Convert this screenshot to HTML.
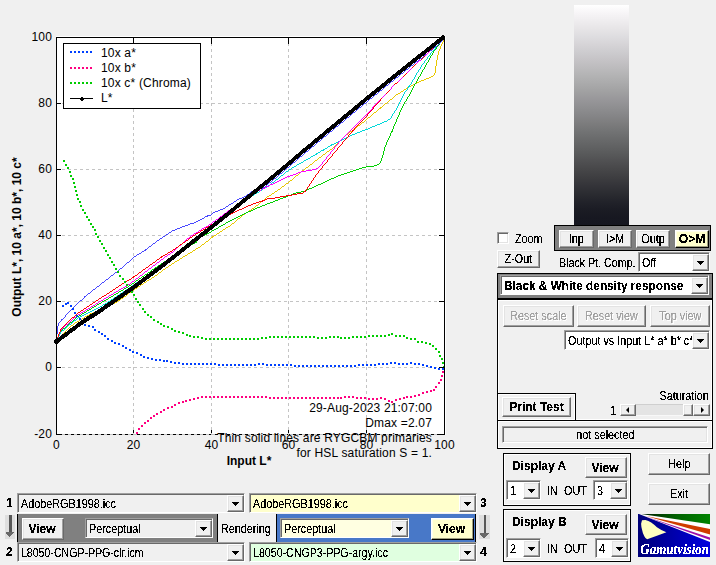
<!DOCTYPE html>
<html lang="en"><head><meta charset="utf-8"><title>Gamutvision</title>
<style>
html,body{margin:0;padding:0}
body{width:716px;height:565px;overflow:hidden;background:#f0f0f0;position:relative;font-family:"Liberation Sans",sans-serif;font-size:12px;color:#000}
.t{position:absolute;white-space:nowrap;line-height:14px;height:14px;font-size:12px}
.p{letter-spacing:.17px}
.p.b{letter-spacing:0}
.s{display:inline-block;transform:scaleX(.9);transform-origin:0 0}
.b .s{transform:none}
.u,.t.b:not(.p),.f,.ct{filter:url(#thr)}
.u.r .s{transform-origin:100% 0}
.b{font-weight:bold}
.btn{position:absolute;box-sizing:border-box;background:#f0f0f0;border:1px solid;border-color:#fff #696969 #696969 #fff;box-shadow:inset -1px -1px 0 #a0a0a0,inset 1px 1px 0 #e3e3e3;text-align:center;white-space:nowrap;font-size:12px;display:flex;align-items:center;justify-content:center;line-height:14px}
.btn .f{display:inline-block}
.btn .s{transform-origin:50% 0}
.btn.sel{border-color:#fff #000 #000 #fff;box-shadow:inset -1px -1px 0 #a0a080,inset 1px 1px 0 #ffffe8}
.btn.dis{color:#a0a0a0;text-shadow:1px 1px 0 #fff}
.combo{position:absolute;box-sizing:border-box;border:1px solid;border-color:#a0a0a0 #fff #fff #a0a0a0;box-shadow:inset 1px 1px 0 #696969;white-space:nowrap;overflow:hidden;font-size:12px;line-height:14px}
.combo .ct{position:absolute;left:3px;display:inline-block}
.combo .cb{position:absolute;right:0;top:1px;bottom:0;box-sizing:border-box;border:1px solid;border-color:#fff #696969 #696969 #fff;box-shadow:inset -1px -1px 0 #a0a0a0,inset 1px 1px 0 #e3e3e3}
.combo .cb svg{position:absolute;left:4px;top:6px;display:block}
.panel{position:absolute;box-sizing:border-box}
.et{box-shadow:inset 0 0 0 1px #fff}
.chk{position:absolute;box-sizing:border-box;width:12px;height:12px;background:#fff;border:1px solid;border-color:#a0a0a0 #fff #fff #a0a0a0;box-shadow:inset 1px 1px 0 #696969,inset -1px -1px 0 #e3e3e3}
.sunk{position:absolute;box-sizing:border-box;border:1px solid;border-color:#a0a0a0 #fff #fff #a0a0a0;box-shadow:inset 1px 1px 0 #696969,inset -1px -1px 0 #e3e3e3;text-align:center;font-size:12px;line-height:14px;white-space:nowrap;padding-top:1px}
.sunk .f{display:inline-block}
.sunk .s{transform-origin:50% 0}
.sb{position:absolute;background:#e4e4e4;box-shadow:inset 0 1px 0 #cfcfcf,inset 0 -1px 0 #f8f8f8}
.sbb{position:absolute;top:0;height:100%;box-sizing:border-box;background:#f0f0f0;border:1px solid;border-color:#fff #696969 #696969 #fff;box-shadow:inset -1px -1px 0 #a0a0a0,inset 1px 1px 0 #e3e3e3}
.al,.ar{position:absolute;top:50%;left:50%;width:0;height:0;border-top:3px solid transparent;border-bottom:3px solid transparent;margin-top:-3px}
.al{border-right:3px solid #000;margin-left:-2px}
.ar{border-left:3px solid #000;margin-left:-1px}
</style></head>
<body>
<svg width="0" height="0" style="position:absolute"><defs><filter id="thr" x="-5%" y="-5%" width="110%" height="110%" color-interpolation-filters="sRGB"><feComponentTransfer><feFuncA type="discrete" tableValues="0 0 0 0 1 1 1 1 1 1"/></feComponentTransfer></filter></defs></svg>
<svg width="716" height="565" viewBox="0 0 716 565" style="position:absolute;left:0;top:0" shape-rendering="crispEdges">
<rect x="56" y="36" width="390" height="399" fill="#fff"/>
<line x1="56" y1="434.5" x2="445" y2="434.5" stroke="#000"/>
<line x1="56.5" y1="428" x2="56.5" y2="435" stroke="#000"/>
<line x1="133.5" y1="428" x2="133.5" y2="435" stroke="#000"/>
<line x1="211.5" y1="428" x2="211.5" y2="435" stroke="#000"/>
<line x1="288.5" y1="428" x2="288.5" y2="435" stroke="#000"/>
<line x1="366.5" y1="428" x2="366.5" y2="435" stroke="#000"/>
<line x1="444.5" y1="428" x2="444.5" y2="435" stroke="#000"/>
<line x1="133.5" y1="37" x2="133.5" y2="435" stroke="#c4c4c4" stroke-dasharray="3 3"/>
<line x1="211.5" y1="37" x2="211.5" y2="435" stroke="#c4c4c4" stroke-dasharray="3 3"/>
<line x1="288.5" y1="37" x2="288.5" y2="435" stroke="#c4c4c4" stroke-dasharray="3 3"/>
<line x1="366.5" y1="37" x2="366.5" y2="435" stroke="#c4c4c4" stroke-dasharray="3 3"/>
<line x1="56" y1="434.5" x2="444" y2="434.5" stroke="#c4c4c4" stroke-dasharray="3 3"/>
<line x1="56" y1="367.5" x2="444" y2="367.5" stroke="#c4c4c4" stroke-dasharray="3 3"/>
<line x1="56" y1="301.5" x2="444" y2="301.5" stroke="#c4c4c4" stroke-dasharray="3 3"/>
<line x1="56" y1="235.5" x2="444" y2="235.5" stroke="#c4c4c4" stroke-dasharray="3 3"/>
<line x1="56" y1="169.5" x2="444" y2="169.5" stroke="#c4c4c4" stroke-dasharray="3 3"/>
<line x1="56" y1="103.5" x2="444" y2="103.5" stroke="#c4c4c4" stroke-dasharray="3 3"/>
<line x1="56" y1="37.5" x2="444" y2="37.5" stroke="#c4c4c4" stroke-dasharray="3 3"/>
<path d="M443 39h1v3h-1zM442 42h1v2h-1zM441 44h1v2h-1zM440 46h1v3h-1zM439 49h1v2h-1zM438 51h1v4h-1zM437 55h1v5h-1zM436 60h1v6h-1zM435 66h1v7h-1zM434 73h1v2h-1zM433 75h1v1h-1zM431 76h2v1h-2zM429 77h2v1h-2zM426 78h3v1h-3zM424 79h2v1h-2zM421 80h3v1h-3zM419 81h2v1h-2zM417 82h2v1h-2zM415 83h2v1h-2zM413 84h2v1h-2zM411 85h2v1h-2zM408 86h3v1h-3zM407 87h2v1h-2zM406 88h1v1h-1zM404 89h2v1h-2zM403 90h1v1h-1zM401 91h2v1h-2zM400 92h1v1h-1zM398 93h2v1h-2zM396 94h2v1h-2zM395 95h1v1h-1zM394 96h1v1h-1zM393 97h1v1h-1zM392 98h1v1h-1zM390 99h2v1h-2zM389 100h1v1h-1zM388 101h1v1h-1zM387 102h1v1h-1zM385 103h2v1h-2zM384 104h1v1h-1zM383 105h1v1h-1zM382 106h1v1h-1zM380 107h2v1h-2zM379 108h2v1h-2zM378 109h1v1h-1zM377 110h1v1h-1zM376 111h1v1h-1zM374 112h2v1h-2zM373 113h1v1h-1zM372 114h1v1h-1zM371 115h1v1h-1zM370 116h1v1h-1zM368 117h2v1h-2zM367 118h1v1h-1zM366 119h1v1h-1zM365 120h1v1h-1zM364 121h1v1h-1zM362 122h2v1h-2zM361 123h1v1h-1zM360 124h1v1h-1zM358 125h2v1h-2zM357 126h1v1h-1zM356 127h1v1h-1zM354 128h2v1h-2zM353 129h1v1h-1zM352 130h1v1h-1zM350 131h2v1h-2zM349 132h1v1h-1zM347 133h2v1h-2zM346 134h2v1h-2zM345 135h1v1h-1zM344 136h1v1h-1zM343 137h1v1h-1zM342 138h1v1h-1zM341 139h1v1h-1zM340 140h1v1h-1zM339 141h1v1h-1zM338 142h1v1h-1zM337 143h1v1h-1zM336 144h1v1h-1zM335 145h1v1h-1zM334 146h1v1h-1zM333 147h1v1h-1zM332 148h1v1h-1zM330 149h2v1h-2zM329 150h1v1h-1zM327 151h2v1h-2zM326 152h1v1h-1zM325 153h1v1h-1zM323 154h2v1h-2zM322 155h1v1h-1zM321 156h1v1h-1zM319 157h2v1h-2zM318 158h1v1h-1zM317 159h1v1h-1zM315 160h2v1h-2zM314 161h1v1h-1zM313 162h1v1h-1zM312 163h1v1h-1zM310 164h2v1h-2zM309 165h1v1h-1zM308 166h1v1h-1zM306 167h2v1h-2zM305 168h1v1h-1zM304 169h1v1h-1zM302 170h2v1h-2zM301 171h2v1h-2zM300 172h1v1h-1zM299 173h1v1h-1zM298 174h1v1h-1zM296 175h2v1h-2zM295 176h1v1h-1zM294 177h1v1h-1zM293 178h1v1h-1zM292 179h1v1h-1zM290 180h2v1h-2zM289 181h1v1h-1zM288 182h1v1h-1zM286 183h2v1h-2zM285 184h1v1h-1zM284 185h1v1h-1zM282 186h2v1h-2zM281 187h1v1h-1zM280 188h1v1h-1zM278 189h2v1h-2zM277 190h1v1h-1zM275 191h2v1h-2zM274 192h1v1h-1zM272 193h2v1h-2zM271 194h1v1h-1zM269 195h2v1h-2zM267 196h2v1h-2zM266 197h1v1h-1zM265 198h1v1h-1zM264 199h1v1h-1zM262 200h2v1h-2zM261 201h1v1h-1zM260 202h1v1h-1zM259 203h1v1h-1zM258 204h1v1h-1zM256 205h2v1h-2zM255 206h1v1h-1zM254 207h1v1h-1zM252 208h2v1h-2zM251 209h1v1h-1zM249 210h2v1h-2zM248 211h1v1h-1zM246 212h2v1h-2zM245 213h1v1h-1zM243 214h2v1h-2zM242 215h1v1h-1zM241 216h1v1h-1zM240 217h1v1h-1zM238 218h2v1h-2zM237 219h1v1h-1zM236 220h1v1h-1zM235 221h1v1h-1zM234 222h1v1h-1zM232 223h2v1h-2zM231 224h1v1h-1zM230 225h1v1h-1zM228 226h2v1h-2zM226 227h2v1h-2zM225 228h1v1h-1zM223 229h2v1h-2zM222 230h1v1h-1zM220 231h2v1h-2zM219 232h1v1h-1zM217 233h2v1h-2zM216 234h1v1h-1zM214 235h2v1h-2zM212 236h2v1h-2zM211 237h2v1h-2zM210 238h1v1h-1zM209 239h1v1h-1zM208 240h1v1h-1zM206 241h2v1h-2zM205 242h1v1h-1zM204 243h1v1h-1zM202 244h2v1h-2zM201 245h1v1h-1zM200 246h1v1h-1zM198 247h2v1h-2zM196 248h2v1h-2zM195 249h1v1h-1zM193 250h2v1h-2zM192 251h1v1h-1zM190 252h2v1h-2zM188 253h2v1h-2zM187 254h1v1h-1zM185 255h2v1h-2zM183 256h2v1h-2zM182 257h1v1h-1zM180 258h2v1h-2zM179 259h1v1h-1zM177 260h2v1h-2zM175 261h2v1h-2zM174 262h1v1h-1zM172 263h2v1h-2zM171 264h1v1h-1zM169 265h2v1h-2zM168 266h1v1h-1zM166 267h2v1h-2zM165 268h1v1h-1zM163 269h2v1h-2zM162 270h1v1h-1zM161 271h1v1h-1zM159 272h2v1h-2zM158 273h1v1h-1zM157 274h1v1h-1zM155 275h2v1h-2zM154 276h1v1h-1zM152 277h2v1h-2zM151 278h1v1h-1zM149 279h2v1h-2zM147 280h2v1h-2zM146 281h1v1h-1zM144 282h2v1h-2zM143 283h1v1h-1zM141 284h2v1h-2zM140 285h1v1h-1zM138 286h2v1h-2zM137 287h1v1h-1zM135 288h2v1h-2zM133 289h2v1h-2zM132 290h2v1h-2zM131 291h1v1h-1zM129 292h2v1h-2zM128 293h1v1h-1zM127 294h1v1h-1zM126 295h1v1h-1zM124 296h2v1h-2zM123 297h1v1h-1zM121 298h2v1h-2zM120 299h1v1h-1zM118 300h2v1h-2zM117 301h1v1h-1zM115 302h2v1h-2zM113 303h2v1h-2zM111 304h2v1h-2zM109 305h2v1h-2zM106 306h3v1h-3zM104 307h2v1h-2zM102 308h2v1h-2zM99 309h3v1h-3zM97 310h2v1h-2zM95 311h2v1h-2zM93 312h2v1h-2zM90 313h3v1h-3zM89 314h1v1h-1zM87 315h2v1h-2zM85 316h2v1h-2zM84 317h1v1h-1zM82 318h2v1h-2zM80 319h2v1h-2zM79 320h1v1h-1zM77 321h2v1h-2zM75 322h2v1h-2zM74 323h1v1h-1zM73 324h1v1h-1zM71 325h2v1h-2zM70 326h1v1h-1zM69 327h1v1h-1zM68 328h1v1h-1zM67 329h1v1h-1zM66 330h1v1h-1zM65 331h1v1h-1zM64 332h1v1h-1zM63 333h1v1h-1zM62 334h1v1h-1zM61 335h1v1h-1zM60 336h1v1h-1zM59 337h1v2h-1zM58 339h1v1h-1zM57 340h1v1h-1z" fill="#e8c800"/>
<path d="M443 38h1v1h-1zM442 39h1v2h-1zM441 41h1v1h-1zM440 42h1v1h-1zM439 43h1v2h-1zM438 45h1v1h-1zM437 46h1v1h-1zM436 47h1v2h-1zM435 49h1v1h-1zM434 50h1v1h-1zM433 51h1v2h-1zM432 53h1v2h-1zM431 55h1v1h-1zM430 56h1v2h-1zM429 58h1v2h-1zM428 60h1v2h-1zM427 62h1v1h-1zM426 63h1v2h-1zM425 65h1v2h-1zM424 67h1v2h-1zM423 69h1v1h-1zM422 70h1v2h-1zM421 72h1v2h-1zM420 74h1v2h-1zM419 76h1v1h-1zM418 77h1v2h-1zM417 79h1v2h-1zM416 81h1v2h-1zM415 83h1v1h-1zM414 84h1v2h-1zM413 86h1v2h-1zM412 88h1v2h-1zM411 90h1v2h-1zM410 92h1v2h-1zM409 94h1v2h-1zM408 96h1v1h-1zM407 97h1v2h-1zM406 99h1v2h-1zM405 101h1v1h-1zM404 102h1v2h-1zM403 104h1v2h-1zM402 106h1v2h-1zM401 108h1v2h-1zM400 110h1v2h-1zM399 112h1v3h-1zM398 115h1v2h-1zM397 117h1v2h-1zM396 119h1v3h-1zM395 122h1v2h-1zM394 124h1v2h-1zM393 126h1v3h-1zM392 129h1v2h-1zM391 131h2v1h-2zM391 132h1v1h-1zM390 133h1v3h-1zM389 136h1v2h-1zM388 138h1v2h-1zM387 140h1v2h-1zM386 142h1v3h-1zM385 145h1v2h-1zM384 147h1v4h-1zM383 151h1v4h-1zM382 155h1v3h-1zM381 158h1v3h-1zM380 161h1v2h-1zM379 163h1v1h-1zM377 164h2v1h-2zM374 165h3v1h-3zM366 166h8v1h-8zM362 167h4v1h-4zM359 168h3v1h-3zM356 169h3v1h-3zM353 170h3v1h-3zM350 171h3v1h-3zM347 172h3v1h-3zM344 173h3v1h-3zM341 174h3v1h-3zM338 175h3v1h-3zM336 176h2v1h-2zM334 177h2v1h-2zM331 178h3v1h-3zM329 179h2v1h-2zM327 180h2v1h-2zM325 181h2v1h-2zM323 182h2v1h-2zM321 183h2v1h-2zM318 184h3v1h-3zM316 185h2v1h-2zM314 186h2v1h-2zM312 187h2v1h-2zM309 188h3v1h-3zM307 189h2v1h-2zM305 190h2v1h-2zM301 191h4v1h-4zM296 192h5v1h-5zM293 193h3v1h-3zM291 194h2v1h-2zM288 195h3v1h-3zM286 196h2v1h-2zM283 197h3v1h-3zM280 198h3v1h-3zM278 199h2v1h-2zM275 200h3v1h-3zM273 201h2v1h-2zM270 202h3v1h-3zM267 203h3v1h-3zM265 204h2v1h-2zM262 205h3v1h-3zM260 206h2v1h-2zM257 207h3v1h-3zM255 208h2v1h-2zM253 209h2v1h-2zM251 210h2v1h-2zM248 211h3v1h-3zM246 212h2v1h-2zM244 213h2v1h-2zM242 214h2v1h-2zM240 215h2v1h-2zM238 216h2v1h-2zM236 217h2v1h-2zM234 218h2v1h-2zM232 219h2v1h-2zM230 220h2v1h-2zM228 221h2v1h-2zM226 222h2v1h-2zM225 223h1v1h-1zM223 224h2v1h-2zM221 225h2v1h-2zM219 226h2v1h-2zM218 227h1v1h-1zM216 228h2v1h-2zM214 229h2v1h-2zM212 230h2v1h-2zM211 231h1v1h-1zM209 232h2v1h-2zM207 233h2v1h-2zM205 234h2v1h-2zM203 235h2v1h-2zM201 236h2v1h-2zM200 237h1v1h-1zM199 238h1v1h-1zM198 239h1v1h-1zM197 240h1v1h-1zM196 241h1v1h-1zM195 242h2v1h-2zM193 243h2v1h-2zM191 244h2v1h-2zM190 245h1v1h-1zM188 246h2v1h-2zM187 247h1v1h-1zM185 248h2v1h-2zM183 249h2v1h-2zM182 250h1v1h-1zM180 251h2v1h-2zM179 252h1v1h-1zM177 253h2v1h-2zM176 254h1v1h-1zM174 255h2v1h-2zM172 256h2v1h-2zM171 257h1v1h-1zM169 258h2v1h-2zM168 259h1v1h-1zM166 260h2v1h-2zM164 261h2v1h-2zM163 262h1v1h-1zM161 263h2v1h-2zM160 264h1v1h-1zM158 265h2v1h-2zM157 266h1v1h-1zM155 267h2v1h-2zM154 268h1v1h-1zM152 269h2v1h-2zM151 270h1v1h-1zM150 271h1v1h-1zM148 272h2v1h-2zM147 273h1v1h-1zM145 274h2v1h-2zM144 275h1v1h-1zM142 276h2v1h-2zM141 277h1v1h-1zM139 278h2v1h-2zM138 279h1v1h-1zM136 280h2v1h-2zM135 281h1v1h-1zM134 282h1v1h-1zM132 283h2v1h-2zM131 284h1v1h-1zM129 285h2v1h-2zM128 286h1v1h-1zM126 287h2v1h-2zM124 288h2v1h-2zM123 289h1v1h-1zM121 290h2v1h-2zM119 291h2v1h-2zM118 292h1v1h-1zM116 293h2v1h-2zM114 294h2v1h-2zM113 295h1v1h-1zM111 296h2v1h-2zM109 297h2v1h-2zM108 298h1v1h-1zM106 299h2v1h-2zM104 300h2v1h-2zM102 301h2v1h-2zM101 302h1v1h-1zM99 303h2v1h-2zM97 304h2v1h-2zM96 305h1v1h-1zM94 306h2v1h-2zM92 307h2v1h-2zM91 308h1v1h-1zM89 309h2v1h-2zM87 310h2v1h-2zM86 311h1v1h-1zM84 312h2v1h-2zM82 313h2v1h-2zM81 314h1v1h-1zM79 315h2v1h-2zM77 316h2v1h-2zM76 317h1v1h-1zM75 318h1v1h-1zM74 319h1v1h-1zM73 320h1v1h-1zM72 321h1v1h-1zM70 322h2v1h-2zM69 323h1v1h-1zM68 324h1v1h-1zM67 325h1v1h-1zM66 326h1v1h-1zM65 327h1v1h-1zM63 328h2v1h-2zM62 329h1v1h-1zM61 330h1v1h-1zM60 331h1v2h-1zM59 333h1v2h-1zM58 335h1v3h-1zM57 338h1v2h-1z" fill="#00d000"/>
<path d="M443 38h1v1h-1zM442 39h1v2h-1zM441 41h1v1h-1zM440 42h1v1h-1zM439 43h1v1h-1zM438 44h1v1h-1zM437 45h1v1h-1zM436 46h1v1h-1zM435 47h1v2h-1zM434 49h1v1h-1zM433 50h1v1h-1zM432 51h1v1h-1zM431 52h1v1h-1zM430 53h1v2h-1zM429 55h1v1h-1zM428 56h1v1h-1zM427 57h1v2h-1zM426 59h1v1h-1zM425 60h1v1h-1zM424 61h1v2h-1zM423 63h1v1h-1zM422 64h1v1h-1zM421 65h1v2h-1zM420 67h1v2h-1zM419 69h1v1h-1zM418 70h1v2h-1zM417 72h1v1h-1zM416 73h1v2h-1zM415 75h1v2h-1zM414 77h1v2h-1zM413 79h1v1h-1zM412 80h1v2h-1zM411 82h1v2h-1zM410 84h1v1h-1zM409 85h1v1h-1zM408 86h2v1h-2zM408 87h1v1h-1zM407 88h1v2h-1zM406 90h1v1h-1zM405 91h1v1h-1zM404 92h1v2h-1zM403 94h1v2h-1zM402 96h1v2h-1zM401 98h1v2h-1zM400 100h1v2h-1zM399 102h1v2h-1zM398 104h1v2h-1zM397 106h1v2h-1zM396 108h1v2h-1zM395 110h1v1h-1zM394 111h1v2h-1zM393 113h1v1h-1zM392 114h1v2h-1zM391 116h1v2h-1zM390 118h1v1h-1zM388 119h2v1h-2zM387 120h1v1h-1zM384 121h3v1h-3zM382 122h2v1h-2zM380 123h2v1h-2zM377 124h3v1h-3zM375 125h2v1h-2zM372 126h3v1h-3zM370 127h2v1h-2zM368 128h2v1h-2zM365 129h3v1h-3zM362 130h3v1h-3zM360 131h2v1h-2zM357 132h3v1h-3zM355 133h2v1h-2zM352 134h3v1h-3zM350 135h2v1h-2zM348 136h2v1h-2zM346 137h2v1h-2zM344 138h2v1h-2zM342 139h2v1h-2zM340 140h2v1h-2zM338 141h2v1h-2zM336 142h2v1h-2zM334 143h2v1h-2zM331 144h3v1h-3zM330 145h2v1h-2zM328 146h2v1h-2zM327 147h1v1h-1zM325 148h2v1h-2zM323 149h2v1h-2zM321 150h3v1h-3zM320 151h1v1h-1zM318 152h2v1h-2zM316 153h2v1h-2zM315 154h2v1h-2zM313 155h2v1h-2zM311 156h2v1h-2zM310 157h1v1h-1zM308 158h2v1h-2zM306 159h2v1h-2zM304 160h2v1h-2zM303 161h1v1h-1zM301 162h2v1h-2zM299 163h2v1h-2zM297 164h2v1h-2zM296 165h1v1h-1zM294 166h2v1h-2zM292 167h2v1h-2zM291 168h1v1h-1zM289 169h2v1h-2zM288 170h1v1h-1zM286 171h2v1h-2zM285 172h1v1h-1zM284 173h1v1h-1zM283 174h1v1h-1zM281 175h2v1h-2zM280 176h1v1h-1zM279 177h1v1h-1zM278 178h1v1h-1zM276 179h2v1h-2zM275 180h1v1h-1zM274 181h1v1h-1zM272 182h2v1h-2zM271 183h1v1h-1zM270 184h1v1h-1zM268 185h2v1h-2zM267 186h1v1h-1zM265 187h2v1h-2zM263 188h2v1h-2zM262 189h1v1h-1zM260 190h2v1h-2zM259 191h1v1h-1zM257 192h2v1h-2zM255 193h2v1h-2zM254 194h1v1h-1zM252 195h2v1h-2zM251 196h1v1h-1zM250 197h1v1h-1zM248 198h2v1h-2zM247 199h1v1h-1zM246 200h1v1h-1zM245 201h1v1h-1zM243 202h2v1h-2zM242 203h1v1h-1zM241 204h1v1h-1zM239 205h2v1h-2zM238 206h1v1h-1zM237 207h1v1h-1zM235 208h2v1h-2zM234 209h1v1h-1zM233 210h1v1h-1zM231 211h2v1h-2zM230 212h1v1h-1zM229 213h1v1h-1zM227 214h2v1h-2zM226 215h1v1h-1zM225 216h1v1h-1zM224 217h1v1h-1zM222 218h2v1h-2zM221 219h1v1h-1zM220 220h1v1h-1zM218 221h2v1h-2zM217 222h1v1h-1zM216 223h1v1h-1zM214 224h2v1h-2zM213 225h1v1h-1zM212 226h1v1h-1zM210 227h2v1h-2zM209 228h1v1h-1zM208 229h1v1h-1zM206 230h2v1h-2zM205 231h1v1h-1zM204 232h1v1h-1zM202 233h2v1h-2zM201 234h1v1h-1zM200 235h1v1h-1zM199 236h1v1h-1zM197 237h2v1h-2zM196 238h1v1h-1zM195 239h1v1h-1zM193 240h2v1h-2zM192 241h1v1h-1zM191 242h1v1h-1zM189 243h2v1h-2zM188 244h1v1h-1zM187 245h1v1h-1zM185 246h2v1h-2zM184 247h1v1h-1zM183 248h1v1h-1zM182 249h1v1h-1zM180 250h2v1h-2zM179 251h1v1h-1zM178 252h1v1h-1zM176 253h2v1h-2zM175 254h1v1h-1zM174 255h1v1h-1zM172 256h2v1h-2zM171 257h1v1h-1zM170 258h1v1h-1zM168 259h2v1h-2zM167 260h1v1h-1zM166 261h1v1h-1zM164 262h2v1h-2zM163 263h1v1h-1zM161 264h2v1h-2zM160 265h1v1h-1zM159 266h1v1h-1zM157 267h2v1h-2zM156 268h1v1h-1zM154 269h2v1h-2zM153 270h1v1h-1zM152 271h1v1h-1zM150 272h2v1h-2zM149 273h1v1h-1zM148 274h1v1h-1zM146 275h2v1h-2zM145 276h1v1h-1zM143 277h2v1h-2zM142 278h1v1h-1zM141 279h1v1h-1zM139 280h2v1h-2zM138 281h1v1h-1zM136 282h2v1h-2zM135 283h1v1h-1zM134 284h1v1h-1zM132 285h2v1h-2zM131 286h1v1h-1zM129 287h2v1h-2zM128 288h1v1h-1zM126 289h2v1h-2zM125 290h1v1h-1zM123 291h2v1h-2zM122 292h1v1h-1zM120 293h2v1h-2zM119 294h1v1h-1zM117 295h2v1h-2zM116 296h1v1h-1zM114 297h2v1h-2zM113 298h1v1h-1zM111 299h2v1h-2zM110 300h1v1h-1zM108 301h2v1h-2zM107 302h1v1h-1zM105 303h2v1h-2zM103 304h2v1h-2zM102 305h1v1h-1zM100 306h2v1h-2zM98 307h2v1h-2zM96 308h2v1h-2zM94 309h2v1h-2zM92 310h2v1h-2zM90 311h2v1h-2zM88 312h2v1h-2zM86 313h2v1h-2zM84 314h2v1h-2zM82 315h2v1h-2zM80 316h2v1h-2zM78 317h2v1h-2zM77 318h1v1h-1zM76 319h1v1h-1zM74 320h2v1h-2zM73 321h1v1h-1zM72 322h1v1h-1zM71 323h1v1h-1zM69 324h2v1h-2zM68 325h1v1h-1zM67 326h1v1h-1zM66 327h1v1h-1zM65 328h1v1h-1zM64 329h1v1h-1zM62 330h2v1h-2zM61 331h1v1h-1zM60 332h1v2h-1zM59 334h1v2h-1zM58 336h1v2h-1zM57 338h1v2h-1z" fill="#00d8d8"/>
<path d="M443 38h1v1h-1zM441 39h2v1h-2zM440 40h2v1h-2zM439 41h1v1h-1zM438 42h1v1h-1zM437 43h1v1h-1zM436 44h1v1h-1zM435 45h1v1h-1zM434 46h1v1h-1zM433 47h1v1h-1zM432 48h1v1h-1zM431 49h1v1h-1zM430 50h1v1h-1zM429 51h1v1h-1zM428 52h1v1h-1zM427 53h1v1h-1zM426 54h1v1h-1zM425 55h1v1h-1zM424 56h1v1h-1zM423 57h1v1h-1zM422 58h1v1h-1zM421 59h1v1h-1zM419 60h2v1h-2zM418 61h1v1h-1zM417 62h1v1h-1zM416 63h1v1h-1zM415 64h1v1h-1zM414 65h1v1h-1zM413 66h1v1h-1zM412 67h1v1h-1zM411 68h1v1h-1zM410 69h1v1h-1zM409 70h1v1h-1zM408 71h1v1h-1zM407 72h1v1h-1zM406 73h1v1h-1zM405 74h1v1h-1zM404 75h1v1h-1zM403 76h1v1h-1zM402 77h1v1h-1zM401 78h1v1h-1zM400 79h1v1h-1zM399 80h1v1h-1zM398 81h1v1h-1zM397 82h1v1h-1zM395 83h2v1h-2zM394 84h1v1h-1zM393 85h1v1h-1zM392 86h1v1h-1zM391 87h1v2h-1zM390 89h1v1h-1zM389 90h1v1h-1zM388 91h1v1h-1zM387 92h1v1h-1zM386 93h1v1h-1zM385 94h1v1h-1zM384 95h1v1h-1zM383 96h1v1h-1zM382 97h1v1h-1zM381 98h1v1h-1zM380 99h1v1h-1zM379 100h1v1h-1zM378 101h1v1h-1zM377 102h1v1h-1zM376 103h1v1h-1zM375 104h1v1h-1zM374 105h1v1h-1zM373 106h1v1h-1zM372 107h1v2h-1zM371 109h1v1h-1zM370 110h1v1h-1zM369 111h1v1h-1zM368 112h1v1h-1zM367 113h1v1h-1zM366 114h1v1h-1zM365 115h1v1h-1zM364 116h1v1h-1zM363 117h1v1h-1zM362 118h1v1h-1zM361 119h1v1h-1zM360 120h1v1h-1zM359 121h1v1h-1zM358 122h1v1h-1zM357 123h1v1h-1zM356 124h1v1h-1zM355 125h1v1h-1zM354 126h1v1h-1zM353 127h1v1h-1zM352 128h1v1h-1zM351 129h1v1h-1zM350 130h1v1h-1zM349 131h1v1h-1zM348 132h1v1h-1zM347 133h1v1h-1zM346 134h1v1h-1zM345 135h1v1h-1zM344 136h1v1h-1zM343 137h1v1h-1zM342 138h1v1h-1zM341 139h1v1h-1zM340 140h1v1h-1zM339 141h1v1h-1zM338 142h1v2h-1zM337 144h1v1h-1zM336 145h1v1h-1zM335 146h1v1h-1zM334 147h1v2h-1zM333 149h1v1h-1zM332 150h1v1h-1zM331 151h1v1h-1zM330 152h1v2h-1zM329 154h1v1h-1zM328 155h1v1h-1zM327 156h1v1h-1zM326 157h1v2h-1zM325 159h1v1h-1zM324 160h1v1h-1zM323 161h1v1h-1zM322 162h1v2h-1zM321 164h1v1h-1zM320 165h1v1h-1zM319 166h1v1h-1zM318 167h1v1h-1zM316 168h2v1h-2zM312 169h4v1h-4zM306 170h6v1h-6zM301 171h5v1h-5zM298 172h3v1h-3zM296 173h2v1h-2zM293 174h3v1h-3zM290 175h3v1h-3zM287 176h3v1h-3zM285 177h2v1h-2zM283 178h2v1h-2zM281 179h2v1h-2zM279 180h2v1h-2zM277 181h2v1h-2zM275 182h2v1h-2zM273 183h2v1h-2zM270 184h3v1h-3zM269 185h1v1h-1zM266 186h3v1h-3zM265 187h1v1h-1zM262 188h3v1h-3zM261 189h1v1h-1zM258 190h3v1h-3zM257 191h1v1h-1zM255 192h2v1h-2zM254 193h1v1h-1zM252 194h2v1h-2zM251 195h1v1h-1zM249 196h2v1h-2zM248 197h1v1h-1zM246 198h2v1h-2zM245 199h1v1h-1zM243 200h2v1h-2zM242 201h1v1h-1zM240 202h2v1h-2zM239 203h1v1h-1zM237 204h2v1h-2zM236 205h1v1h-1zM234 206h2v1h-2zM233 207h1v1h-1zM231 208h2v1h-2zM230 209h1v1h-1zM228 210h2v1h-2zM227 211h1v1h-1zM226 212h1v1h-1zM224 213h2v1h-2zM223 214h1v1h-1zM222 215h1v1h-1zM220 216h2v1h-2zM219 217h1v1h-1zM218 218h1v1h-1zM216 219h2v1h-2zM215 220h1v1h-1zM213 221h2v1h-2zM212 222h1v1h-1zM211 223h1v1h-1zM209 224h2v1h-2zM208 225h1v1h-1zM206 226h2v1h-2zM204 227h2v1h-2zM202 228h2v1h-2zM201 229h1v1h-1zM199 230h2v1h-2zM198 231h1v1h-1zM196 232h2v1h-2zM194 233h2v1h-2zM193 234h1v1h-1zM191 235h2v1h-2zM190 236h1v1h-1zM189 237h1v1h-1zM187 238h2v1h-2zM186 239h1v1h-1zM185 240h1v1h-1zM184 241h1v1h-1zM183 242h1v1h-1zM182 243h1v1h-1zM181 244h1v1h-1zM179 245h2v1h-2zM178 246h1v1h-1zM177 247h1v1h-1zM176 248h1v1h-1zM175 249h1v1h-1zM174 250h1v1h-1zM173 251h1v1h-1zM171 252h2v1h-2zM170 253h1v1h-1zM168 254h2v1h-2zM167 255h1v1h-1zM165 256h2v1h-2zM164 257h1v1h-1zM163 258h1v1h-1zM161 259h2v1h-2zM160 260h1v1h-1zM159 261h1v1h-1zM157 262h2v1h-2zM156 263h1v1h-1zM155 264h1v1h-1zM153 265h2v1h-2zM152 266h1v1h-1zM151 267h1v1h-1zM149 268h2v1h-2zM148 269h1v1h-1zM147 270h1v1h-1zM145 271h2v1h-2zM144 272h1v1h-1zM143 273h1v1h-1zM142 274h1v1h-1zM140 275h2v1h-2zM139 276h1v1h-1zM138 277h1v1h-1zM136 278h2v1h-2zM135 279h1v1h-1zM134 280h1v1h-1zM132 281h2v1h-2zM131 282h1v1h-1zM130 283h1v1h-1zM128 284h2v1h-2zM127 285h1v1h-1zM125 286h2v1h-2zM123 287h2v1h-2zM121 288h2v1h-2zM119 289h2v1h-2zM118 290h1v1h-1zM116 291h2v1h-2zM114 292h2v1h-2zM113 293h1v1h-1zM111 294h2v1h-2zM109 295h2v1h-2zM108 296h1v1h-1zM106 297h2v1h-2zM104 298h2v1h-2zM103 299h1v1h-1zM101 300h2v1h-2zM99 301h2v1h-2zM98 302h1v1h-1zM96 303h2v1h-2zM95 304h1v1h-1zM93 305h2v1h-2zM91 306h2v1h-2zM90 307h1v1h-1zM88 308h2v1h-2zM86 309h2v1h-2zM85 310h1v1h-1zM83 311h2v1h-2zM81 312h2v1h-2zM80 313h1v1h-1zM78 314h2v1h-2zM77 315h1v1h-1zM76 316h1v1h-1zM74 317h2v1h-2zM73 318h1v1h-1zM72 319h1v1h-1zM71 320h1v1h-1zM70 321h1v1h-1zM69 322h1v1h-1zM68 323h1v1h-1zM66 324h2v1h-2zM65 325h1v1h-1zM64 326h1v1h-1zM63 327h1v1h-1zM62 328h1v1h-1zM61 329h1v1h-1zM60 330h1v2h-1zM59 332h1v2h-1zM58 334h1v3h-1zM57 337h1v3h-1z" fill="#ff00ff"/>
<path d="M443 38h1v1h-1zM441 39h2v1h-2zM440 40h2v1h-2zM439 41h1v1h-1zM438 42h1v1h-1zM437 43h1v1h-1zM436 44h1v1h-1zM435 45h1v1h-1zM434 46h1v1h-1zM433 47h1v1h-1zM432 48h1v1h-1zM431 49h1v1h-1zM430 50h1v1h-1zM429 51h1v1h-1zM428 52h1v1h-1zM427 53h1v1h-1zM426 54h1v1h-1zM425 55h1v1h-1zM424 56h1v1h-1zM423 57h1v1h-1zM422 58h1v1h-1zM421 59h1v1h-1zM419 60h2v1h-2zM418 61h1v1h-1zM417 62h1v1h-1zM416 63h1v1h-1zM415 64h1v1h-1zM414 65h1v1h-1zM413 66h1v1h-1zM412 67h1v1h-1zM411 68h1v1h-1zM410 69h1v1h-1zM409 70h1v1h-1zM408 71h1v1h-1zM407 72h1v1h-1zM406 73h1v1h-1zM405 74h1v1h-1zM404 75h1v1h-1zM403 76h1v1h-1zM402 77h1v1h-1zM401 78h1v1h-1zM400 79h1v1h-1zM399 80h1v1h-1zM398 81h1v1h-1zM397 82h1v1h-1zM395 83h2v1h-2zM394 84h1v1h-1zM393 85h1v1h-1zM392 86h1v1h-1zM391 87h1v2h-1zM390 89h1v1h-1zM389 90h1v1h-1zM388 91h1v1h-1zM387 92h1v1h-1zM386 93h1v1h-1zM385 94h1v1h-1zM384 95h1v1h-1zM383 96h1v1h-1zM382 97h1v1h-1zM381 98h1v1h-1zM380 99h1v2h-1zM379 101h1v1h-1zM378 102h1v1h-1zM377 103h1v1h-1zM376 104h1v1h-1zM375 105h1v1h-1zM374 106h1v1h-1zM373 107h1v2h-1zM372 109h1v1h-1zM371 110h1v1h-1zM370 111h1v1h-1zM369 112h1v1h-1zM368 113h1v1h-1zM367 114h1v2h-1zM366 116h1v1h-1zM365 117h1v1h-1zM364 118h1v1h-1zM363 119h1v1h-1zM362 120h1v1h-1zM361 121h1v1h-1zM360 122h1v1h-1zM359 123h1v1h-1zM358 124h1v1h-1zM357 125h1v1h-1zM356 126h1v1h-1zM355 127h1v1h-1zM354 128h1v2h-1zM352 130h2v1h-2zM352 131h1v1h-1zM351 132h1v1h-1zM350 133h1v1h-1zM349 134h1v1h-1zM348 135h1v2h-1zM347 137h1v1h-1zM346 138h1v1h-1zM345 139h1v1h-1zM344 140h1v1h-1zM343 141h1v1h-1zM342 142h1v2h-1zM341 144h1v1h-1zM340 145h1v1h-1zM339 146h1v1h-1zM338 147h1v1h-1zM337 148h1v2h-1zM336 150h1v1h-1zM335 151h1v1h-1zM334 152h1v1h-1zM333 153h1v1h-1zM332 154h1v2h-1zM331 156h1v1h-1zM330 157h1v1h-1zM329 158h1v1h-1zM328 159h1v1h-1zM327 160h1v2h-1zM326 162h1v1h-1zM325 163h1v1h-1zM324 164h1v1h-1zM323 165h1v1h-1zM322 166h1v2h-1zM321 168h1v1h-1zM320 169h1v1h-1zM319 170h1v1h-1zM318 171h1v2h-1zM317 173h1v1h-1zM316 174h1v1h-1zM315 175h1v2h-1zM314 177h1v1h-1zM313 178h1v2h-1zM312 180h1v1h-1zM311 181h1v2h-1zM310 183h1v1h-1zM309 184h1v2h-1zM308 186h1v1h-1zM307 187h1v2h-1zM306 189h1v1h-1zM305 190h1v1h-1zM304 191h2v1h-2zM303 192h1v1h-1zM297 193h6v1h-6zM292 194h5v1h-5zM286 195h6v1h-6zM280 196h6v1h-6zM275 197h5v1h-5zM267 198h8v1h-8zM265 199h2v1h-2zM262 200h3v1h-3zM259 201h4v1h-4zM256 202h3v1h-3zM253 203h3v1h-3zM251 204h2v1h-2zM248 205h3v1h-3zM246 206h2v1h-2zM244 207h2v1h-2zM242 208h2v1h-2zM239 209h3v1h-3zM237 210h2v1h-2zM235 211h2v1h-2zM233 212h2v1h-2zM231 213h2v1h-2zM229 214h2v1h-2zM227 215h2v1h-2zM226 216h1v1h-1zM224 217h2v1h-2zM222 218h2v1h-2zM220 219h2v1h-2zM218 220h2v1h-2zM217 221h1v1h-1zM215 222h2v1h-2zM213 223h2v1h-2zM211 224h2v1h-2zM210 225h1v1h-1zM208 226h2v1h-2zM206 227h2v1h-2zM205 228h1v1h-1zM203 229h2v1h-2zM201 230h2v1h-2zM200 231h1v1h-1zM198 232h2v1h-2zM196 233h2v1h-2zM195 234h1v1h-1zM193 235h2v1h-2zM192 236h1v1h-1zM190 237h2v1h-2zM189 238h1v1h-1zM188 239h1v1h-1zM186 240h2v1h-2zM185 241h1v1h-1zM183 242h2v1h-2zM182 243h1v1h-1zM180 244h2v1h-2zM179 245h1v1h-1zM178 246h1v1h-1zM176 247h2v1h-2zM175 248h1v1h-1zM173 249h2v1h-2zM172 250h1v1h-1zM170 251h2v1h-2zM168 252h2v1h-2zM167 253h1v1h-1zM165 254h2v1h-2zM163 255h2v1h-2zM161 256h2v1h-2zM160 257h2v1h-2zM159 258h1v1h-1zM157 259h2v1h-2zM156 260h1v1h-1zM155 261h1v1h-1zM153 262h2v1h-2zM152 263h1v1h-1zM150 264h2v1h-2zM149 265h1v1h-1zM148 266h1v1h-1zM146 267h2v1h-2zM145 268h1v1h-1zM143 269h2v1h-2zM142 270h1v1h-1zM141 271h1v1h-1zM139 272h2v1h-2zM138 273h1v1h-1zM137 274h1v1h-1zM135 275h2v1h-2zM133 276h2v1h-2zM132 277h2v1h-2zM131 278h1v1h-1zM129 279h2v1h-2zM127 280h2v1h-2zM126 281h1v1h-1zM124 282h2v1h-2zM122 283h2v1h-2zM121 284h1v1h-1zM119 285h2v1h-2zM118 286h1v1h-1zM116 287h2v1h-2zM115 288h1v1h-1zM113 289h2v1h-2zM112 290h1v1h-1zM110 291h2v1h-2zM109 292h1v1h-1zM107 293h2v1h-2zM106 294h1v1h-1zM104 295h2v1h-2zM102 296h2v1h-2zM101 297h1v1h-1zM99 298h2v1h-2zM98 299h1v1h-1zM96 300h2v1h-2zM95 301h1v1h-1zM93 302h2v1h-2zM92 303h1v1h-1zM90 304h2v1h-2zM89 305h1v1h-1zM87 306h2v1h-2zM86 307h1v1h-1zM84 308h2v1h-2zM83 309h1v1h-1zM81 310h2v1h-2zM80 311h1v1h-1zM78 312h2v1h-2zM77 313h1v1h-1zM76 314h1v1h-1zM75 315h1v1h-1zM74 316h1v1h-1zM72 317h2v1h-2zM71 318h1v1h-1zM70 319h1v1h-1zM69 320h1v1h-1zM68 321h1v1h-1zM67 322h1v1h-1zM66 323h1v1h-1zM65 324h1v1h-1zM64 325h1v1h-1zM63 326h1v1h-1zM62 327h1v1h-1zM61 328h1v1h-1zM60 329h1v3h-1zM59 332h1v2h-1zM58 334h1v3h-1zM57 337h1v3h-1z" fill="#ff0000"/>
<path d="M443 38h1v2h-1zM442 40h1v1h-1zM441 41h1v1h-1zM440 42h1v1h-1zM439 43h1v1h-1zM438 44h1v1h-1zM437 45h1v1h-1zM435 46h2v1h-2zM434 47h1v1h-1zM433 48h1v1h-1zM432 49h1v1h-1zM430 50h2v1h-2zM429 51h1v1h-1zM428 52h1v1h-1zM427 53h1v1h-1zM425 54h2v1h-2zM424 55h1v1h-1zM423 56h1v1h-1zM422 57h1v1h-1zM420 58h2v1h-2zM419 59h1v1h-1zM418 60h1v1h-1zM416 61h2v1h-2zM415 62h1v1h-1zM414 63h1v1h-1zM413 64h1v1h-1zM411 65h2v1h-2zM410 66h1v1h-1zM409 67h1v1h-1zM408 68h1v1h-1zM406 69h2v1h-2zM405 70h1v1h-1zM404 71h1v1h-1zM403 72h1v1h-1zM401 73h2v1h-2zM400 74h1v1h-1zM399 75h1v1h-1zM398 76h1v1h-1zM396 77h2v1h-2zM395 78h1v1h-1zM394 79h1v1h-1zM393 80h1v1h-1zM391 81h2v1h-2zM390 82h1v1h-1zM389 83h1v1h-1zM388 84h1v1h-1zM386 85h2v1h-2zM385 86h1v1h-1zM384 87h1v1h-1zM383 88h1v1h-1zM382 89h1v1h-1zM380 90h2v1h-2zM379 91h1v1h-1zM378 92h1v1h-1zM377 93h1v1h-1zM375 94h2v1h-2zM374 95h1v1h-1zM373 96h1v1h-1zM372 97h1v1h-1zM370 98h2v1h-2zM369 99h1v1h-1zM368 100h1v1h-1zM367 101h1v1h-1zM366 102h1v1h-1zM364 103h2v1h-2zM363 104h1v1h-1zM362 105h1v1h-1zM361 106h1v1h-1zM359 107h2v1h-2zM358 108h1v1h-1zM357 109h1v1h-1zM356 110h1v1h-1zM355 111h1v1h-1zM353 112h2v1h-2zM352 113h1v1h-1zM351 114h1v1h-1zM350 115h1v1h-1zM349 116h1v1h-1zM347 117h2v1h-2zM346 118h1v1h-1zM345 119h1v1h-1zM344 120h1v1h-1zM343 121h1v1h-1zM341 122h2v1h-2zM340 123h1v1h-1zM339 124h1v1h-1zM338 125h1v1h-1zM336 126h2v1h-2zM335 127h1v1h-1zM334 128h1v1h-1zM333 129h1v1h-1zM332 130h1v1h-1zM330 131h2v1h-2zM329 132h1v1h-1zM328 133h1v1h-1zM327 134h1v1h-1zM326 135h1v1h-1zM324 136h2v1h-2zM323 137h1v1h-1zM322 138h1v1h-1zM321 139h1v1h-1zM320 140h1v1h-1zM318 141h2v1h-2zM317 142h1v1h-1zM316 143h1v1h-1zM315 144h1v1h-1zM314 145h1v1h-1zM312 146h2v1h-2zM311 147h1v1h-1zM310 148h1v1h-1zM309 149h1v1h-1zM308 150h1v1h-1zM306 151h2v1h-2zM305 152h1v1h-1zM304 153h1v1h-1zM303 154h1v1h-1zM302 155h1v1h-1zM300 156h2v1h-2zM299 157h1v1h-1zM298 158h1v1h-1zM297 159h1v1h-1zM296 160h1v1h-1zM295 161h1v1h-1zM293 162h2v1h-2zM292 163h1v1h-1zM291 164h1v1h-1zM290 165h1v1h-1zM289 166h1v1h-1zM287 167h2v1h-2zM286 168h1v1h-1zM285 169h1v1h-1zM284 170h1v1h-1zM283 171h1v1h-1zM282 172h1v1h-1zM280 173h2v1h-2zM279 174h1v1h-1zM278 175h1v1h-1zM277 176h1v1h-1zM276 177h1v1h-1zM274 178h2v1h-2zM273 179h1v1h-1zM272 180h1v1h-1zM271 181h1v1h-1zM269 182h2v1h-2zM268 183h1v1h-1zM267 184h1v1h-1zM266 185h1v1h-1zM265 186h1v1h-1zM257 187h2v1h-2zM263 187h2v1h-2zM256 188h1v1h-1zM259 188h4v1h-4zM254 189h2v1h-2zM253 190h1v1h-1zM251 191h2v1h-2zM250 192h1v1h-1zM249 193h1v1h-1zM247 194h2v1h-2zM246 195h1v1h-1zM244 196h2v1h-2zM242 197h2v1h-2zM239 198h3v1h-3zM237 199h2v1h-2zM236 200h1v1h-1zM234 201h2v1h-2zM233 202h1v1h-1zM231 203h2v1h-2zM229 204h2v1h-2zM228 205h1v1h-1zM226 206h2v1h-2zM225 207h1v1h-1zM223 208h2v1h-2zM220 209h3v1h-3zM218 210h2v1h-2zM215 211h3v1h-3zM213 212h2v1h-2zM212 213h1v1h-1zM211 214h1v1h-1zM207 215h4v1h-4zM205 216h3v1h-3zM204 217h1v1h-1zM202 218h2v1h-2zM200 219h2v1h-2zM198 220h2v1h-2zM196 221h2v1h-2zM194 222h2v1h-2zM190 223h4v1h-4zM188 224h2v1h-2zM185 225h3v1h-3zM182 226h3v1h-3zM180 227h2v1h-2zM177 228h3v1h-3zM175 229h2v1h-2zM172 230h3v1h-3zM171 231h1v1h-1zM169 232h2v1h-2zM168 233h1v1h-1zM166 234h2v1h-2zM165 235h1v1h-1zM163 236h2v1h-2zM162 237h1v1h-1zM160 238h2v1h-2zM159 239h1v1h-1zM157 240h2v1h-2zM156 241h1v1h-1zM155 242h1v1h-1zM153 243h2v1h-2zM152 244h1v1h-1zM151 245h1v1h-1zM149 246h2v1h-2zM148 247h1v1h-1zM147 248h1v1h-1zM145 249h2v1h-2zM144 250h2v1h-2zM142 251h2v1h-2zM141 252h1v1h-1zM139 253h2v1h-2zM137 254h2v1h-2zM136 255h1v1h-1zM134 256h2v1h-2zM133 257h1v1h-1zM132 258h1v1h-1zM131 259h1v1h-1zM130 260h1v1h-1zM129 261h1v1h-1zM127 262h2v1h-2zM126 263h1v1h-1zM125 264h1v1h-1zM124 265h1v1h-1zM123 266h1v1h-1zM122 267h1v1h-1zM120 268h2v1h-2zM119 269h1v1h-1zM118 270h1v1h-1zM117 271h1v1h-1zM115 272h2v1h-2zM114 273h1v1h-1zM113 274h1v1h-1zM111 275h2v1h-2zM110 276h1v1h-1zM109 277h1v1h-1zM108 278h1v1h-1zM106 279h2v1h-2zM105 280h1v1h-1zM104 281h1v1h-1zM102 282h2v1h-2zM101 283h1v1h-1zM100 284h1v1h-1zM99 285h1v1h-1zM97 286h2v1h-2zM96 287h1v1h-1zM95 288h1v1h-1zM93 289h2v1h-2zM92 290h1v1h-1zM91 291h1v1h-1zM90 292h1v1h-1zM88 293h2v1h-2zM87 294h1v1h-1zM86 295h1v1h-1zM84 296h2v1h-2zM84 297h1v1h-1zM83 298h1v1h-1zM82 299h1v1h-1zM80 300h2v1h-2zM79 301h1v1h-1zM78 302h1v1h-1zM77 303h1v1h-1zM76 304h1v1h-1zM75 305h1v1h-1zM74 306h1v1h-1zM73 307h1v1h-1zM72 308h1v1h-1zM71 309h1v1h-1zM70 310h1v1h-1zM69 311h1v1h-1zM68 312h1v1h-1zM67 313h1v1h-1zM66 314h1v1h-1zM65 315h1v2h-1zM64 317h1v1h-1zM63 318h1v1h-1zM61 319h2v1h-2zM61 320h1v1h-1zM60 321h1v1h-1zM59 322h1v1h-1zM58 323h1v3h-1zM57 326h1v8h-1z" fill="#4848ff"/>
<path d="M443 38h1v1h-1zM442 39h1v1h-1zM438 42h1v1h-1zM437 43h1v1h-1zM436 44h1v1h-1zM435 45h1v1h-1zM434 46h1v1h-1zM429 51h1v1h-1zM428 52h1v1h-1zM427 53h1v1h-1zM426 54h1v1h-1zM425 55h1v1h-1zM419 60h2v1h-2zM418 61h1v1h-1zM417 62h1v1h-1zM416 63h1v1h-1zM411 68h1v1h-1zM410 69h1v1h-1zM409 70h1v1h-1zM408 71h1v1h-1zM407 72h1v1h-1zM402 77h1v1h-1zM401 78h1v1h-1zM400 79h1v1h-1zM399 80h1v1h-1zM398 81h1v1h-1zM393 85h1v1h-1zM392 86h1v1h-1zM391 87h1v2h-1zM390 89h1v1h-1zM385 94h1v1h-1zM384 95h1v1h-1zM383 96h1v1h-1zM382 97h1v1h-1z" fill="#ff00ff"/>
<path d="M67 302h2v1h-2zM65 303h4v1h-4zM65 304h2v1h-2zM62 305h2v2h-2zM70 305h2v2h-2zM72 308h2v2h-2zM74 312h2v2h-2zM76 315h2v2h-2zM79 318h2v2h-2zM81 321h2v2h-2zM84 324h2v2h-2zM88 325h2v2h-2zM92 326h2v2h-2zM94 329h2v2h-2zM98 331h2v2h-2zM101 333h2v2h-2zM104 335h2v2h-2zM107 338h2v2h-2zM111 340h2v2h-2zM114 342h2v2h-2zM118 343h2v2h-2zM122 345h2v2h-2zM125 347h2v2h-2zM129 349h2v2h-2zM132 351h2v2h-2zM136 352h2v2h-2zM140 354h2v2h-2zM143 356h2v2h-2zM147 357h2v2h-2zM151 358h2v2h-2zM155 359h2v2h-2zM159 359h2v2h-2zM163 360h2v2h-2zM166 360h2v2h-2zM170 361h2v2h-2zM174 362h2v2h-2zM178 362h2v2h-2zM390 362h2v2h-2zM394 362h2v2h-2zM410 362h2v2h-2zM182 363h2v2h-2zM186 363h2v2h-2zM190 363h2v2h-2zM194 363h2v2h-2zM198 363h2v2h-2zM202 363h2v2h-2zM206 363h2v2h-2zM210 363h2v2h-2zM214 363h2v2h-2zM258 363h2v2h-2zM262 363h2v2h-2zM378 363h2v2h-2zM382 363h2v2h-2zM386 363h2v2h-2zM398 363h2v2h-2zM402 363h2v2h-2zM406 363h2v2h-2zM414 363h2v2h-2zM418 363h2v2h-2zM218 364h2v2h-2zM222 364h2v2h-2zM226 364h2v2h-2zM230 364h2v2h-2zM234 364h2v2h-2zM238 364h2v2h-2zM242 364h2v2h-2zM246 364h2v2h-2zM250 364h2v2h-2zM254 364h2v2h-2zM266 364h2v2h-2zM270 364h2v2h-2zM274 364h2v2h-2zM278 364h2v2h-2zM282 364h2v2h-2zM286 364h2v2h-2zM290 364h2v2h-2zM358 364h2v2h-2zM362 364h2v2h-2zM366 364h2v2h-2zM370 364h2v2h-2zM374 364h2v2h-2zM422 364h2v2h-2zM294 365h2v2h-2zM298 365h2v2h-2zM302 365h2v2h-2zM306 365h2v2h-2zM310 365h2v2h-2zM314 365h2v2h-2zM318 365h2v2h-2zM322 365h2v2h-2zM326 365h2v2h-2zM330 365h2v2h-2zM334 365h2v2h-2zM338 365h2v2h-2zM342 365h2v2h-2zM346 365h2v2h-2zM350 365h2v2h-2zM354 365h2v2h-2zM426 365h2v2h-2zM430 366h2v2h-2zM434 367h2v2h-2zM438 368h2v2h-2zM442 368h2v2h-2z" fill="#0040ff"/>
<path d="M442 371h2v2h-2zM441 375h2v2h-2zM440 379h2v2h-2zM438 382h2v2h-2zM435 386h2v2h-2zM433 389h2v2h-2zM430 390h2v2h-2zM426 391h2v2h-2zM422 392h2v2h-2zM418 394h2v2h-2zM414 395h2v2h-2zM201 396h2v2h-2zM205 396h2v2h-2zM209 396h2v2h-2zM213 396h2v2h-2zM217 396h2v2h-2zM221 396h2v2h-2zM225 396h2v2h-2zM229 396h2v2h-2zM233 396h2v2h-2zM237 396h2v2h-2zM241 396h2v2h-2zM245 396h2v2h-2zM249 396h2v2h-2zM253 396h2v2h-2zM257 396h2v2h-2zM261 396h2v2h-2zM265 396h2v2h-2zM344 396h2v2h-2zM348 396h2v2h-2zM352 396h2v2h-2zM406 396h2v2h-2zM410 396h2v2h-2zM197 397h2v2h-2zM269 397h2v2h-2zM273 397h2v2h-2zM277 397h2v2h-2zM281 397h2v2h-2zM285 397h2v2h-2zM289 397h2v2h-2zM293 397h2v2h-2zM297 397h2v2h-2zM301 397h2v2h-2zM305 397h2v2h-2zM309 397h2v2h-2zM313 397h2v2h-2zM317 397h2v2h-2zM321 397h2v2h-2zM325 397h2v2h-2zM329 397h2v2h-2zM333 397h2v2h-2zM337 397h2v2h-2zM340 397h2v2h-2zM356 397h2v2h-2zM360 397h2v2h-2zM364 397h2v2h-2zM380 397h2v2h-2zM403 397h2v2h-2zM193 398h2v2h-2zM368 398h2v2h-2zM372 398h2v2h-2zM376 398h2v2h-2zM384 398h2v2h-2zM399 398h2v2h-2zM189 399h2v2h-2zM395 399h2v2h-2zM185 400h2v2h-2zM388 400h2v2h-2zM182 401h2v2h-2zM391 401h2v2h-2zM178 402h2v2h-2zM174 404h2v2h-2zM171 406h2v2h-2zM167 407h2v2h-2zM163 409h2v2h-2zM160 411h2v2h-2zM156 413h2v2h-2zM153 415h2v2h-2zM150 417h2v2h-2zM147 420h2v2h-2zM144 422h2v2h-2zM141 425h2v2h-2zM138 428h2v2h-2zM136 432h2v2h-2z" fill="#ff0080"/>
<path d="M63 160h2v2h-2zM65 164h2v2h-2zM67 167h2v2h-2zM69 171h2v2h-2zM70 175h2v2h-2zM72 178h2v2h-2zM73 182h2v2h-2zM74 186h2v2h-2zM75 190h2v2h-2zM76 194h2v2h-2zM77 198h2v2h-2zM79 201h2v2h-2zM80 205h2v2h-2zM82 209h2v2h-2zM84 212h2v2h-2zM86 216h2v2h-2zM88 219h2v2h-2zM90 223h2v2h-2zM92 226h2v2h-2zM94 229h2v2h-2zM95 233h2v2h-2zM97 236h2v2h-2zM99 240h2v2h-2zM101 243h2v2h-2zM103 247h2v2h-2zM105 250h2v2h-2zM107 254h2v2h-2zM109 257h2v2h-2zM111 261h2v2h-2zM113 264h2v2h-2zM115 268h2v2h-2zM117 271h2v2h-2zM119 275h2v2h-2zM122 278h2v2h-2zM124 281h2v2h-2zM126 284h2v2h-2zM129 288h2v2h-2zM131 291h2v2h-2zM133 294h2v2h-2zM135 298h2v2h-2zM137 301h2v2h-2zM139 304h2v2h-2zM142 308h2v2h-2zM144 311h2v2h-2zM147 314h2v2h-2zM150 316h2v2h-2zM153 319h2v2h-2zM157 321h2v2h-2zM160 323h2v2h-2zM163 325h2v2h-2zM167 326h2v2h-2zM171 328h2v2h-2zM174 330h2v2h-2zM178 331h2v2h-2zM182 332h2v2h-2zM391 333h2v2h-2zM186 334h2v2h-2zM388 334h2v2h-2zM189 335h2v2h-2zM368 335h2v2h-2zM372 335h2v2h-2zM376 335h2v2h-2zM380 335h2v2h-2zM384 335h2v2h-2zM395 335h2v2h-2zM399 335h2v2h-2zM403 335h2v2h-2zM193 336h2v2h-2zM197 336h2v2h-2zM269 336h2v2h-2zM273 336h2v2h-2zM277 336h2v2h-2zM281 336h2v2h-2zM285 336h2v2h-2zM289 336h2v2h-2zM293 336h2v2h-2zM297 336h2v2h-2zM301 336h2v2h-2zM305 336h2v2h-2zM309 336h2v2h-2zM313 336h2v2h-2zM329 336h2v2h-2zM333 336h2v2h-2zM337 336h2v2h-2zM352 336h2v2h-2zM356 336h2v2h-2zM360 336h2v2h-2zM364 336h2v2h-2zM201 337h2v2h-2zM261 337h2v2h-2zM265 337h2v2h-2zM317 337h2v2h-2zM321 337h2v2h-2zM325 337h2v2h-2zM340 337h2v2h-2zM344 337h2v2h-2zM348 337h2v2h-2zM406 337h2v2h-2zM205 338h2v2h-2zM209 338h2v2h-2zM213 338h2v2h-2zM217 338h2v2h-2zM221 338h2v2h-2zM225 338h2v2h-2zM229 338h2v2h-2zM233 338h2v2h-2zM237 338h2v2h-2zM241 338h2v2h-2zM245 338h2v2h-2zM249 338h2v2h-2zM253 338h2v2h-2zM257 338h2v2h-2zM410 338h2v2h-2zM414 338h2v2h-2zM417 341h2v2h-2zM421 341h2v2h-2zM425 342h2v2h-2zM429 343h2v2h-2zM432 345h2v2h-2zM435 348h2v2h-2zM438 351h2v2h-2zM439 355h2v2h-2zM441 358h2v2h-2zM442 362h2v2h-2zM443 366h1v2h-1z" fill="#00cc00"/>
<path d="M56.5 435V37.5H444.5V435" fill="none" stroke="#000"/>
<line x1="56.5" y1="37" x2="56.5" y2="44" stroke="#000"/>
<line x1="133.5" y1="37" x2="133.5" y2="44" stroke="#000"/>
<line x1="211.5" y1="37" x2="211.5" y2="44" stroke="#000"/>
<line x1="288.5" y1="37" x2="288.5" y2="44" stroke="#000"/>
<line x1="366.5" y1="37" x2="366.5" y2="44" stroke="#000"/>
<line x1="444.5" y1="37" x2="444.5" y2="44" stroke="#000"/>
<line x1="56" y1="434.5" x2="61" y2="434.5" stroke="#000"/>
<line x1="439" y1="434.5" x2="445" y2="434.5" stroke="#000"/>
<line x1="56" y1="367.5" x2="61" y2="367.5" stroke="#000"/>
<line x1="439" y1="367.5" x2="445" y2="367.5" stroke="#000"/>
<line x1="56" y1="301.5" x2="61" y2="301.5" stroke="#000"/>
<line x1="439" y1="301.5" x2="445" y2="301.5" stroke="#000"/>
<line x1="56" y1="235.5" x2="61" y2="235.5" stroke="#000"/>
<line x1="439" y1="235.5" x2="445" y2="235.5" stroke="#000"/>
<line x1="56" y1="169.5" x2="61" y2="169.5" stroke="#000"/>
<line x1="439" y1="169.5" x2="445" y2="169.5" stroke="#000"/>
<line x1="56" y1="103.5" x2="61" y2="103.5" stroke="#000"/>
<line x1="439" y1="103.5" x2="445" y2="103.5" stroke="#000"/>
<line x1="56" y1="37.5" x2="61" y2="37.5" stroke="#000"/>
<line x1="439" y1="37.5" x2="445" y2="37.5" stroke="#000"/>
<path d="M442 35h2v1h-2zM441 36h4v1h-4zM440 37h5v1h-5zM439 38h6v1h-6zM437 39h8v1h-8zM436 40h6v1h-6zM435 41h6v1h-6zM434 42h6v1h-6zM432 43h7v1h-7zM431 44h6v1h-6zM430 45h6v1h-6zM429 46h6v1h-6zM427 47h7v1h-7zM426 48h6v1h-6zM425 49h6v1h-6zM424 50h6v1h-6zM422 51h7v1h-7zM421 52h6v1h-6zM420 53h6v1h-6zM418 54h7v1h-7zM417 55h7v1h-7zM416 56h6v1h-6zM415 57h6v1h-6zM413 58h7v1h-7zM412 59h6v1h-6zM411 60h6v1h-6zM410 61h6v1h-6zM408 62h7v1h-7zM407 63h6v1h-6zM406 64h6v1h-6zM405 65h6v1h-6zM403 66h7v1h-7zM402 67h6v1h-6zM401 68h6v1h-6zM400 69h6v1h-6zM398 70h7v1h-7zM397 71h6v1h-6zM396 72h6v1h-6zM395 73h6v1h-6zM393 74h7v1h-7zM392 75h6v1h-6zM391 76h6v1h-6zM390 77h6v1h-6zM388 78h7v1h-7zM387 79h6v1h-6zM386 80h6v1h-6zM385 81h6v1h-6zM384 82h6v1h-6zM382 83h6v1h-6zM381 84h6v1h-6zM380 85h6v1h-6zM379 86h6v1h-6zM377 87h7v1h-7zM376 88h6v1h-6zM375 89h6v1h-6zM374 90h6v1h-6zM372 91h7v1h-7zM371 92h6v1h-6zM370 93h6v1h-6zM369 94h6v1h-6zM367 95h7v1h-7zM366 96h6v1h-6zM365 97h6v1h-6zM364 98h6v1h-6zM363 99h6v1h-6zM361 100h6v1h-6zM360 101h6v1h-6zM359 102h6v1h-6zM358 103h6v1h-6zM357 104h6v1h-6zM355 105h6v1h-6zM354 106h6v1h-6zM353 107h6v1h-6zM352 108h6v1h-6zM351 109h6v1h-6zM349 110h6v1h-6zM348 111h6v1h-6zM347 112h6v1h-6zM346 113h6v1h-6zM344 114h7v1h-7zM343 115h6v1h-6zM342 116h6v1h-6zM341 117h6v1h-6zM340 118h6v1h-6zM338 119h6v1h-6zM337 120h6v1h-6zM336 121h6v1h-6zM335 122h6v1h-6zM334 123h6v1h-6zM332 124h6v1h-6zM331 125h6v1h-6zM330 126h6v1h-6zM329 127h6v1h-6zM327 128h7v1h-7zM326 129h6v1h-6zM325 130h6v1h-6zM324 131h6v1h-6zM323 132h6v1h-6zM322 133h5v1h-5zM320 134h6v1h-6zM319 135h6v1h-6zM318 136h6v1h-6zM317 137h6v1h-6zM315 138h7v1h-7zM314 139h6v1h-6zM313 140h6v1h-6zM312 141h6v1h-6zM311 142h6v1h-6zM310 143h5v1h-5zM308 144h6v1h-6zM307 145h6v1h-6zM306 146h6v1h-6zM305 147h6v1h-6zM303 148h7v1h-7zM302 149h6v1h-6zM301 150h6v1h-6zM300 151h6v1h-6zM299 152h6v1h-6zM298 153h5v1h-5zM296 154h6v1h-6zM295 155h6v1h-6zM294 156h6v1h-6zM293 157h6v1h-6zM292 158h6v1h-6zM291 159h5v1h-5zM289 160h6v1h-6zM288 161h6v1h-6zM287 162h6v1h-6zM286 163h6v1h-6zM285 164h6v1h-6zM283 165h6v1h-6zM282 166h6v1h-6zM281 167h6v1h-6zM280 168h6v1h-6zM279 169h6v1h-6zM277 170h6v1h-6zM276 171h6v1h-6zM275 172h6v1h-6zM274 173h6v1h-6zM273 174h6v1h-6zM271 175h6v1h-6zM270 176h6v1h-6zM269 177h6v1h-6zM268 178h6v1h-6zM267 179h6v1h-6zM265 180h6v1h-6zM264 181h6v1h-6zM263 182h6v1h-6zM262 183h6v1h-6zM260 184h7v1h-7zM259 185h6v1h-6zM258 186h6v1h-6zM257 187h6v1h-6zM256 188h6v1h-6zM254 189h6v1h-6zM253 190h6v1h-6zM252 191h6v1h-6zM251 192h6v1h-6zM250 193h6v1h-6zM248 194h6v1h-6zM247 195h6v1h-6zM246 196h6v1h-6zM245 197h6v1h-6zM243 198h7v1h-7zM242 199h6v1h-6zM241 200h6v1h-6zM240 201h6v1h-6zM239 202h6v1h-6zM237 203h6v1h-6zM236 204h6v1h-6zM235 205h6v1h-6zM234 206h6v1h-6zM233 207h6v1h-6zM231 208h6v1h-6zM230 209h6v1h-6zM229 210h6v1h-6zM228 211h6v1h-6zM227 212h6v1h-6zM225 213h6v1h-6zM224 214h6v1h-6zM223 215h6v1h-6zM222 216h6v1h-6zM220 217h7v1h-7zM219 218h6v1h-6zM218 219h6v1h-6zM217 220h6v1h-6zM215 221h7v1h-7zM214 222h6v1h-6zM213 223h6v1h-6zM212 224h6v1h-6zM210 225h7v1h-7zM209 226h6v1h-6zM208 227h6v1h-6zM207 228h6v1h-6zM205 229h7v1h-7zM204 230h6v1h-6zM203 231h6v1h-6zM201 232h7v1h-7zM200 233h7v1h-7zM199 234h6v1h-6zM198 235h6v1h-6zM196 236h7v1h-7zM195 237h6v1h-6zM194 238h6v1h-6zM192 239h7v1h-7zM191 240h7v1h-7zM190 241h6v1h-6zM189 242h6v1h-6zM187 243h7v1h-7zM186 244h6v1h-6zM185 245h6v1h-6zM184 246h6v1h-6zM182 247h7v1h-7zM181 248h6v1h-6zM180 249h6v1h-6zM179 250h6v1h-6zM177 251h7v1h-7zM176 252h6v1h-6zM175 253h6v1h-6zM174 254h6v1h-6zM172 255h7v1h-7zM171 256h6v1h-6zM170 257h6v1h-6zM168 258h7v1h-7zM167 259h7v1h-7zM166 260h6v1h-6zM165 261h6v1h-6zM163 262h7v1h-7zM162 263h6v1h-6zM161 264h6v1h-6zM159 265h7v1h-7zM158 266h7v1h-7zM157 267h6v1h-6zM155 268h7v1h-7zM154 269h7v1h-7zM153 270h6v1h-6zM151 271h7v1h-7zM150 272h7v1h-7zM149 273h6v1h-6zM147 274h7v1h-7zM146 275h7v1h-7zM145 276h6v1h-6zM143 277h7v1h-7zM142 278h7v1h-7zM141 279h6v1h-6zM139 280h7v1h-7zM138 281h7v1h-7zM137 282h6v1h-6zM135 283h7v1h-7zM134 284h7v1h-7zM133 285h6v1h-6zM131 286h7v1h-7zM130 287h7v1h-7zM128 288h7v1h-7zM127 289h7v1h-7zM125 290h8v1h-8zM124 291h7v1h-7zM123 292h7v1h-7zM121 293h7v1h-7zM120 294h7v1h-7zM118 295h7v1h-7zM117 296h7v1h-7zM115 297h8v1h-8zM114 298h7v1h-7zM113 299h7v1h-7zM111 300h7v1h-7zM110 301h7v1h-7zM108 302h7v1h-7zM107 303h7v1h-7zM105 304h8v1h-8zM104 305h7v1h-7zM103 306h7v1h-7zM101 307h7v1h-7zM100 308h7v1h-7zM98 309h7v1h-7zM97 310h7v1h-7zM95 311h8v1h-8zM94 312h7v1h-7zM92 313h8v1h-8zM90 314h8v1h-8zM89 315h8v1h-8zM87 316h8v1h-8zM86 317h8v1h-8zM84 318h8v1h-8zM83 319h7v1h-7zM81 320h8v1h-8zM80 321h7v1h-7zM78 322h8v1h-8zM77 323h7v1h-7zM76 324h7v1h-7zM75 325h6v1h-6zM73 326h7v1h-7zM72 327h6v1h-6zM70 328h7v1h-7zM69 329h7v1h-7zM68 330h7v1h-7zM67 331h6v1h-6zM65 332h7v1h-7zM64 333h6v1h-6zM62 334h7v1h-7zM61 335h7v1h-7zM60 336h7v1h-7zM59 337h6v1h-6zM57 338h7v1h-7zM55 339h7v1h-7zM54 340h7v1h-7zM54 341h6v1h-6zM54 342h5v1h-5zM55 343h3v1h-3z" fill="#000"/>
<rect x="63.5" y="43.5" width="137" height="65" fill="#fff" stroke="#000"/>
<line x1="70" y1="52" x2="93" y2="52" stroke="#0040ff" stroke-width="2" stroke-dasharray="2 2"/>
<line x1="70" y1="68" x2="93" y2="68" stroke="#ff0080" stroke-width="2" stroke-dasharray="2 2"/>
<line x1="70" y1="83" x2="93" y2="83" stroke="#00cc00" stroke-width="2" stroke-dasharray="2 2"/>
<line x1="70" y1="98.5" x2="93" y2="98.5" stroke="#000"/>
<path d="M81 97h2v1h1v2h-1v1h-2v-1h-1v-2h1z" fill="#000"/>
</svg>
<div class="t p r" style="top:30px;right:664px;text-align:right;">100</div>
<div class="t p r" style="top:96px;right:664px;text-align:right;">80</div>
<div class="t p r" style="top:162px;right:664px;text-align:right;">60</div>
<div class="t p r" style="top:228px;right:664px;text-align:right;">40</div>
<div class="t p r" style="top:294px;right:664px;text-align:right;">20</div>
<div class="t p r" style="top:360px;right:664px;text-align:right;">0</div>
<div class="t p r" style="top:427px;right:664px;text-align:right;">-20</div>
<div class="t p" style="top:438px;left:-43.5px;width:200px;text-align:center;">0</div>
<div class="t p" style="top:438px;left:33.5px;width:200px;text-align:center;">20</div>
<div class="t p" style="top:438px;left:111.5px;width:200px;text-align:center;">40</div>
<div class="t p" style="top:438px;left:188.5px;width:200px;text-align:center;">60</div>
<div class="t p" style="top:438px;left:266.5px;width:200px;text-align:center;">80</div>
<div class="t p" style="top:438px;left:344.5px;width:200px;text-align:center;">100</div>
<div class="t p b" style="top:454px;left:149px;width:200px;text-align:center;">Input L*</div>
<div class="t p b" style="left:-83px;top:230px;width:200px;text-align:center;transform:rotate(-90deg);transform-origin:50% 50%">Output L*, 10 a*, 10 b*, 10 c*</div>
<div class="t p" style="top:46px;left:101px;">10x a*</div>
<div class="t p" style="top:61px;left:101px;">10x b*</div>
<div class="t p" style="top:76px;left:101px;">10x c* (Chroma)</div>
<div class="t p" style="top:91px;left:101px;">L*</div>
<div class="t p r" style="top:401px;right:284px;text-align:right;">29-Aug-2023 21:07:00</div>
<div class="t p r" style="top:416px;right:284px;text-align:right;">Dmax =2.07</div>
<div class="t p r" style="top:431px;right:284px;text-align:right;">Thin solid lines are RYGCBM primaries</div>
<div class="t p r" style="top:446px;right:284px;text-align:right;">for HSL saturation S = 1.</div>
<div style="position:absolute;left:574px;top:5px;width:55px;height:220px;background:linear-gradient(to bottom,rgb(255,255,255) 0.0%,rgb(247,245,247) 3.6%,rgb(239,237,239) 7.1%,rgb(231,229,231) 10.7%,rgb(222,221,224) 14.3%,rgb(214,212,215) 17.9%,rgb(205,204,207) 21.4%,rgb(197,195,198) 25.0%,rgb(188,187,189) 28.6%,rgb(179,179,180) 32.1%,rgb(170,170,171) 35.7%,rgb(161,161,162) 39.3%,rgb(152,151,154) 42.9%,rgb(143,143,145) 46.4%,rgb(134,134,136) 50.0%,rgb(125,125,126) 53.6%,rgb(115,116,117) 57.1%,rgb(106,107,108) 60.7%,rgb(97,98,99) 64.3%,rgb(88,89,90) 67.9%,rgb(79,79,81) 71.4%,rgb(70,70,72) 75.0%,rgb(61,61,64) 78.6%,rgb(52,52,57) 82.1%,rgb(43,44,49) 85.7%,rgb(34,35,42) 89.3%,rgb(27,28,36) 92.9%,rgb(23,24,33) 96.4%,rgb(22,23,32) 100.0%)"></div>
<div class="chk" style="left:497px;top:232px"></div>
<div class="t u" style="top:232px;left:515px;"><span class="s">Zoom</span></div>
<div class="btn " style="left:497px;top:250px;width:43px;height:18px;"><span class="f"><span class="s" style="">Z-Out</span></span></div>
<div class="panel " style="left:554px;top:225px;width:157px;height:26px;background:#808080;border:1px solid #000;"></div>
<div class="btn " style="left:559px;top:230px;width:35px;height:18px;"><span class="f"><span class="s" style="">Inp</span></span></div>
<div class="btn " style="left:598px;top:230px;width:34px;height:18px;"><span class="f"><span class="s" style="">I&gt;M</span></span></div>
<div class="btn " style="left:636px;top:230px;width:34px;height:18px;"><span class="f"><span class="s" style="">Outp</span></span></div>
<div class="btn b sel" style="left:675px;top:230px;width:34px;height:18px;background:#ffffcc"><span class="f"><span class="s" style="">O&gt;M</span></span></div>
<div class="t u" style="top:256px;left:559px;"><span class="s" style="transform:scaleX(.89)">Black Pt. Comp.</span></div>
<div class="combo " style="left:638px;top:252px;width:72px;height:20px;background:#fff;"><span class="ct" style="top:3px"><span class="s">Off</span></span><div class="cb" style="width:17px;background:#f0f0f0"><svg width="7" height="4" viewBox="0 0 7 4" shape-rendering="crispEdges"><path d="M0 0h7v1h-1v1h-1v1h-1v1h-1v-1h-1v-1h-1v-1h-1z" fill="#000"/></svg></div></div>
<div class="panel " style="left:497px;top:273px;width:216px;height:26px;background:#808080;border:1px solid #000;"></div>
<div class="combo b" style="left:500px;top:275px;width:209px;height:20px;background:#fff;"><span class="ct" style="top:3px"><span class="s" style="transform:scaleX(0.985)">Black &amp; White density response</span></span><div class="cb" style="width:17px;background:#f0f0f0"><svg width="7" height="4" viewBox="0 0 7 4" shape-rendering="crispEdges"><path d="M0 0h7v1h-1v1h-1v1h-1v1h-1v-1h-1v-1h-1v-1h-1z" fill="#000"/></svg></div></div>
<div class="panel et" style="left:497px;top:299px;width:216px;height:122px;background:transparent;border:1px solid #000;"></div>
<div class="btn dis" style="left:503px;top:305px;width:71px;height:22px;"><span class="f"><span class="s" style="">Reset scale</span></span></div>
<div class="btn dis" style="left:577px;top:305px;width:69px;height:22px;"><span class="f"><span class="s" style="">Reset view</span></span></div>
<div class="btn dis" style="left:650px;top:305px;width:60px;height:22px;"><span class="f"><span class="s" style="">Top view</span></span></div>
<div class="combo " style="left:564px;top:330px;width:146px;height:20px;background:#fff;"><span class="ct" style="top:3px"><span class="s">Output vs Input L* a* b* c*</span></span><div class="cb" style="width:17px;background:#f0f0f0"><svg width="7" height="4" viewBox="0 0 7 4" shape-rendering="crispEdges"><path d="M0 0h7v1h-1v1h-1v1h-1v1h-1v-1h-1v-1h-1v-1h-1z" fill="#000"/></svg></div></div>
<div class="panel et" style="left:497px;top:393px;width:79px;height:28px;background:transparent;border:1px solid #000;"></div>
<div class="btn b" style="left:502px;top:397px;width:69px;height:20px;"><span class="f"><span class="s" style="">Print Test</span></span></div>
<div class="t u r" style="top:389px;right:7px;text-align:right;"><span class="s">Saturation</span></div>
<div class="t u" style="top:404px;left:610px;"><span class="s">1</span></div>
<div class="sb" style="left:620px;top:404px;width:90px;height:12px"><div class="sbb" style="left:0;width:16px"><i class="al"></i></div><div class="sbb" style="left:63px;width:10px"></div><div class="sbb" style="left:73px;width:17px"><i class="ar"></i></div></div>
<div class="panel et" style="left:497px;top:420px;width:216px;height:29px;background:transparent;border:1px solid #000;"></div>
<div class="sunk" style="left:502px;top:426px;width:206px;height:17px"><span class="f"><span class="s">not selected</span></span></div>
<div class="panel et" style="left:503px;top:453px;width:128px;height:53px;background:transparent;border:1px solid #000;"></div>
<div class="t b" style="top:459px;left:512px;"><span class="s">Display A</span></div>
<div class="btn b" style="left:585px;top:457px;width:42px;height:21px;"><span class="f"><span class="s" style="position:relative;left:-1px">View</span></span></div>
<div class="combo " style="left:506px;top:480px;width:35px;height:20px;background:#fff;"><span class="ct" style="top:3px"><span class="s">1</span></span><div class="cb" style="width:17px;background:#f0f0f0"><svg width="7" height="4" viewBox="0 0 7 4" shape-rendering="crispEdges"><path d="M0 0h7v1h-1v1h-1v1h-1v1h-1v-1h-1v-1h-1v-1h-1z" fill="#000"/></svg></div></div>
<div class="t u" style="top:484px;left:547px;"><span class="s">IN</span></div>
<div class="t u" style="top:484px;left:564px;"><span class="s">OUT</span></div>
<div class="combo " style="left:593px;top:480px;width:35px;height:20px;background:#fff;"><span class="ct" style="top:3px"><span class="s">3</span></span><div class="cb" style="width:17px;background:#f0f0f0"><svg width="7" height="4" viewBox="0 0 7 4" shape-rendering="crispEdges"><path d="M0 0h7v1h-1v1h-1v1h-1v1h-1v-1h-1v-1h-1v-1h-1z" fill="#000"/></svg></div></div>
<div class="panel et" style="left:503px;top:509px;width:128px;height:53px;background:transparent;border:1px solid #000;"></div>
<div class="t b" style="top:515px;left:512px;"><span class="s">Display B</span></div>
<div class="btn b" style="left:585px;top:514px;width:42px;height:21px;"><span class="f"><span class="s" style="position:relative;left:-1px">View</span></span></div>
<div class="combo " style="left:506px;top:538px;width:35px;height:20px;background:#fff;"><span class="ct" style="top:3px"><span class="s">2</span></span><div class="cb" style="width:17px;background:#f0f0f0"><svg width="7" height="4" viewBox="0 0 7 4" shape-rendering="crispEdges"><path d="M0 0h7v1h-1v1h-1v1h-1v1h-1v-1h-1v-1h-1v-1h-1z" fill="#000"/></svg></div></div>
<div class="t u" style="top:542px;left:547px;"><span class="s">IN</span></div>
<div class="t u" style="top:542px;left:564px;"><span class="s">OUT</span></div>
<div class="combo " style="left:595px;top:538px;width:34px;height:20px;background:#fff;"><span class="ct" style="top:3px"><span class="s">4</span></span><div class="cb" style="width:17px;background:#f0f0f0"><svg width="7" height="4" viewBox="0 0 7 4" shape-rendering="crispEdges"><path d="M0 0h7v1h-1v1h-1v1h-1v1h-1v-1h-1v-1h-1v-1h-1z" fill="#000"/></svg></div></div>
<div class="btn " style="left:648px;top:453px;width:62px;height:22px;"><span class="f"><span class="s" style="">Help</span></span></div>
<div class="btn " style="left:648px;top:483px;width:62px;height:22px;"><span class="f"><span class="s" style="">Exit</span></span></div>
<svg style="position:absolute;left:638px;top:514px" width="72" height="43" viewBox="0 0 72 43">
<defs><linearGradient id="lg" x1="0" y1="0" x2="1" y2="0"><stop offset="0" stop-color="#000078"/><stop offset="1" stop-color="#0000e0"/></linearGradient>
<linearGradient id="gg" x1="0" y1="0" x2="1" y2="0"><stop offset="0" stop-color="#001800"/><stop offset="0.5" stop-color="#006000"/><stop offset="1" stop-color="#008400"/></linearGradient></defs>
<rect width="72" height="43" fill="url(#lg)"/>
<polygon points="1,0 72,0 72,28" fill="#fff"/>
<polygon points="3,0 72,0 72,10.3" fill="url(#gg)"/>
<polygon points="8,2 72,14.9 72,20.6" fill="#d03c00"/>
<polygon points="6,2 72,23.5 72,26" fill="#a010a8"/>
<path d="M4 6.3 L7.4 6 Q10.5 6.6 13.2 8.6 Q16.5 11 18.9 13.2 Q22 15.5 28.4 18.3 L18.9 21.8 L9.2 25.2 Q7.2 24.2 6.3 22.3 Q4.6 19 4 15.5 Q3.2 12.5 3.1 9.7 Z" fill="#ffffc0"/>
<text x="2.3" y="40.1" font-family="Liberation Serif, serif" font-style="italic" font-weight="bold" font-size="14" fill="#fff" filter="url(#thr)" textLength="68.7" lengthAdjust="spacingAndGlyphs">Gamutvision</text>
</svg>
<div class="t b" style="top:496px;left:6px;"><span class="s">1</span></div>
<div class="t b" style="top:545px;left:6px;"><span class="s">2</span></div>
<div class="combo " style="left:17px;top:493px;width:228px;height:20px;background:#f0f0f0;"><span class="ct" style="top:3px"><span class="s">AdobeRGB1998.icc</span></span><div class="cb" style="width:17px;background:#f0f0f0"><svg width="7" height="4" viewBox="0 0 7 4" shape-rendering="crispEdges"><path d="M0 0h7v1h-1v1h-1v1h-1v1h-1v-1h-1v-1h-1v-1h-1z" fill="#000"/></svg></div></div>
<div class="combo " style="left:17px;top:542px;width:228px;height:20px;background:#f0f0f0;"><span class="ct" style="top:3px"><span class="s" style="transform:scaleX(0.88)">L8050-CNGP-PPG-clr.icm</span></span><div class="cb" style="width:17px;background:#f0f0f0"><svg width="7" height="4" viewBox="0 0 7 4" shape-rendering="crispEdges"><path d="M0 0h7v1h-1v1h-1v1h-1v1h-1v-1h-1v-1h-1v-1h-1z" fill="#000"/></svg></div></div>
<div class="panel " style="left:17px;top:514px;width:201px;height:28px;background:#808080;border:none;border-left:1px solid #000;border-right:1px solid #000"></div>
<div class="btn b" style="left:22px;top:518px;width:42px;height:22px;"><span class="f"><span class="s" style="position:relative;left:-1px">View</span></span></div>
<div class="combo " style="left:85px;top:518px;width:128px;height:20px;background:#f0f0f0;"><span class="ct" style="top:3px"><span class="s">Perceptual</span></span><div class="cb" style="width:17px;background:#f0f0f0"><svg width="7" height="4" viewBox="0 0 7 4" shape-rendering="crispEdges"><path d="M0 0h7v1h-1v1h-1v1h-1v1h-1v-1h-1v-1h-1v-1h-1z" fill="#000"/></svg></div></div>
<div class="t u" style="top:522px;left:221px;"><span class="s">Rendering</span></div>
<div class="combo " style="left:249px;top:493px;width:228px;height:20px;background:#ffffcc;"><span class="ct" style="top:3px"><span class="s">AdobeRGB1998.icc</span></span><div class="cb" style="width:17px;background:#f0f0f0"><svg width="7" height="4" viewBox="0 0 7 4" shape-rendering="crispEdges"><path d="M0 0h7v1h-1v1h-1v1h-1v1h-1v-1h-1v-1h-1v-1h-1z" fill="#000"/></svg></div></div>
<div class="combo " style="left:249px;top:542px;width:228px;height:20px;background:#e0ffe0;"><span class="ct" style="top:3px"><span class="s" style="transform:scaleX(0.885)">L8050-CNGP3-PPG-argy.icc</span></span><div class="cb" style="width:17px;background:#f0f0f0"><svg width="7" height="4" viewBox="0 0 7 4" shape-rendering="crispEdges"><path d="M0 0h7v1h-1v1h-1v1h-1v1h-1v-1h-1v-1h-1v-1h-1z" fill="#000"/></svg></div></div>
<div class="panel " style="left:276px;top:514px;width:200px;height:28px;background:#4878c8;border:none;border-left:1px solid #000;border-right:1px solid #000"></div>
<div class="combo " style="left:280px;top:518px;width:129px;height:20px;background:#ffffe1;"><span class="ct" style="top:3px"><span class="s">Perceptual</span></span><div class="cb" style="width:17px;background:#f0f0f0"><svg width="7" height="4" viewBox="0 0 7 4" shape-rendering="crispEdges"><path d="M0 0h7v1h-1v1h-1v1h-1v1h-1v-1h-1v-1h-1v-1h-1z" fill="#000"/></svg></div></div>
<div class="btn b sel" style="left:431px;top:518px;width:43px;height:22px;background:#ffffcc"><span class="f"><span class="s" style="position:relative;left:-1px">View</span></span></div>
<div class="t b" style="top:496px;left:480px;"><span class="s">3</span></div>
<div class="t b" style="top:545px;left:480px;"><span class="s">4</span></div>
<svg style="position:absolute;left:5px;top:515px" width="10" height="24" viewBox="0 0 10 24" shape-rendering="crispEdges"><rect width="10" height="24" fill="#dedede"/><rect x="4" y="0" width="3" height="18" fill="#585858"/><path d="M2 17h7v1h-1v1h-1v1h-1v1h-1v1h-1v-1h-1v-1h-1v-1h-1v-1h-1z" fill="#686868"/></svg>
<svg style="position:absolute;left:479px;top:515px" width="11" height="24" viewBox="0 0 11 24" shape-rendering="crispEdges"><rect width="11" height="24" fill="#dedede"/><rect x="5" y="0" width="2" height="18" fill="#585858"/><path d="M2 18h8v1h-1v1h-1v1h-1v1h-1v1h-2v-1h-1v-1h-1v-1h-1v-1h-1z" fill="#686868"/></svg>
</body></html>
